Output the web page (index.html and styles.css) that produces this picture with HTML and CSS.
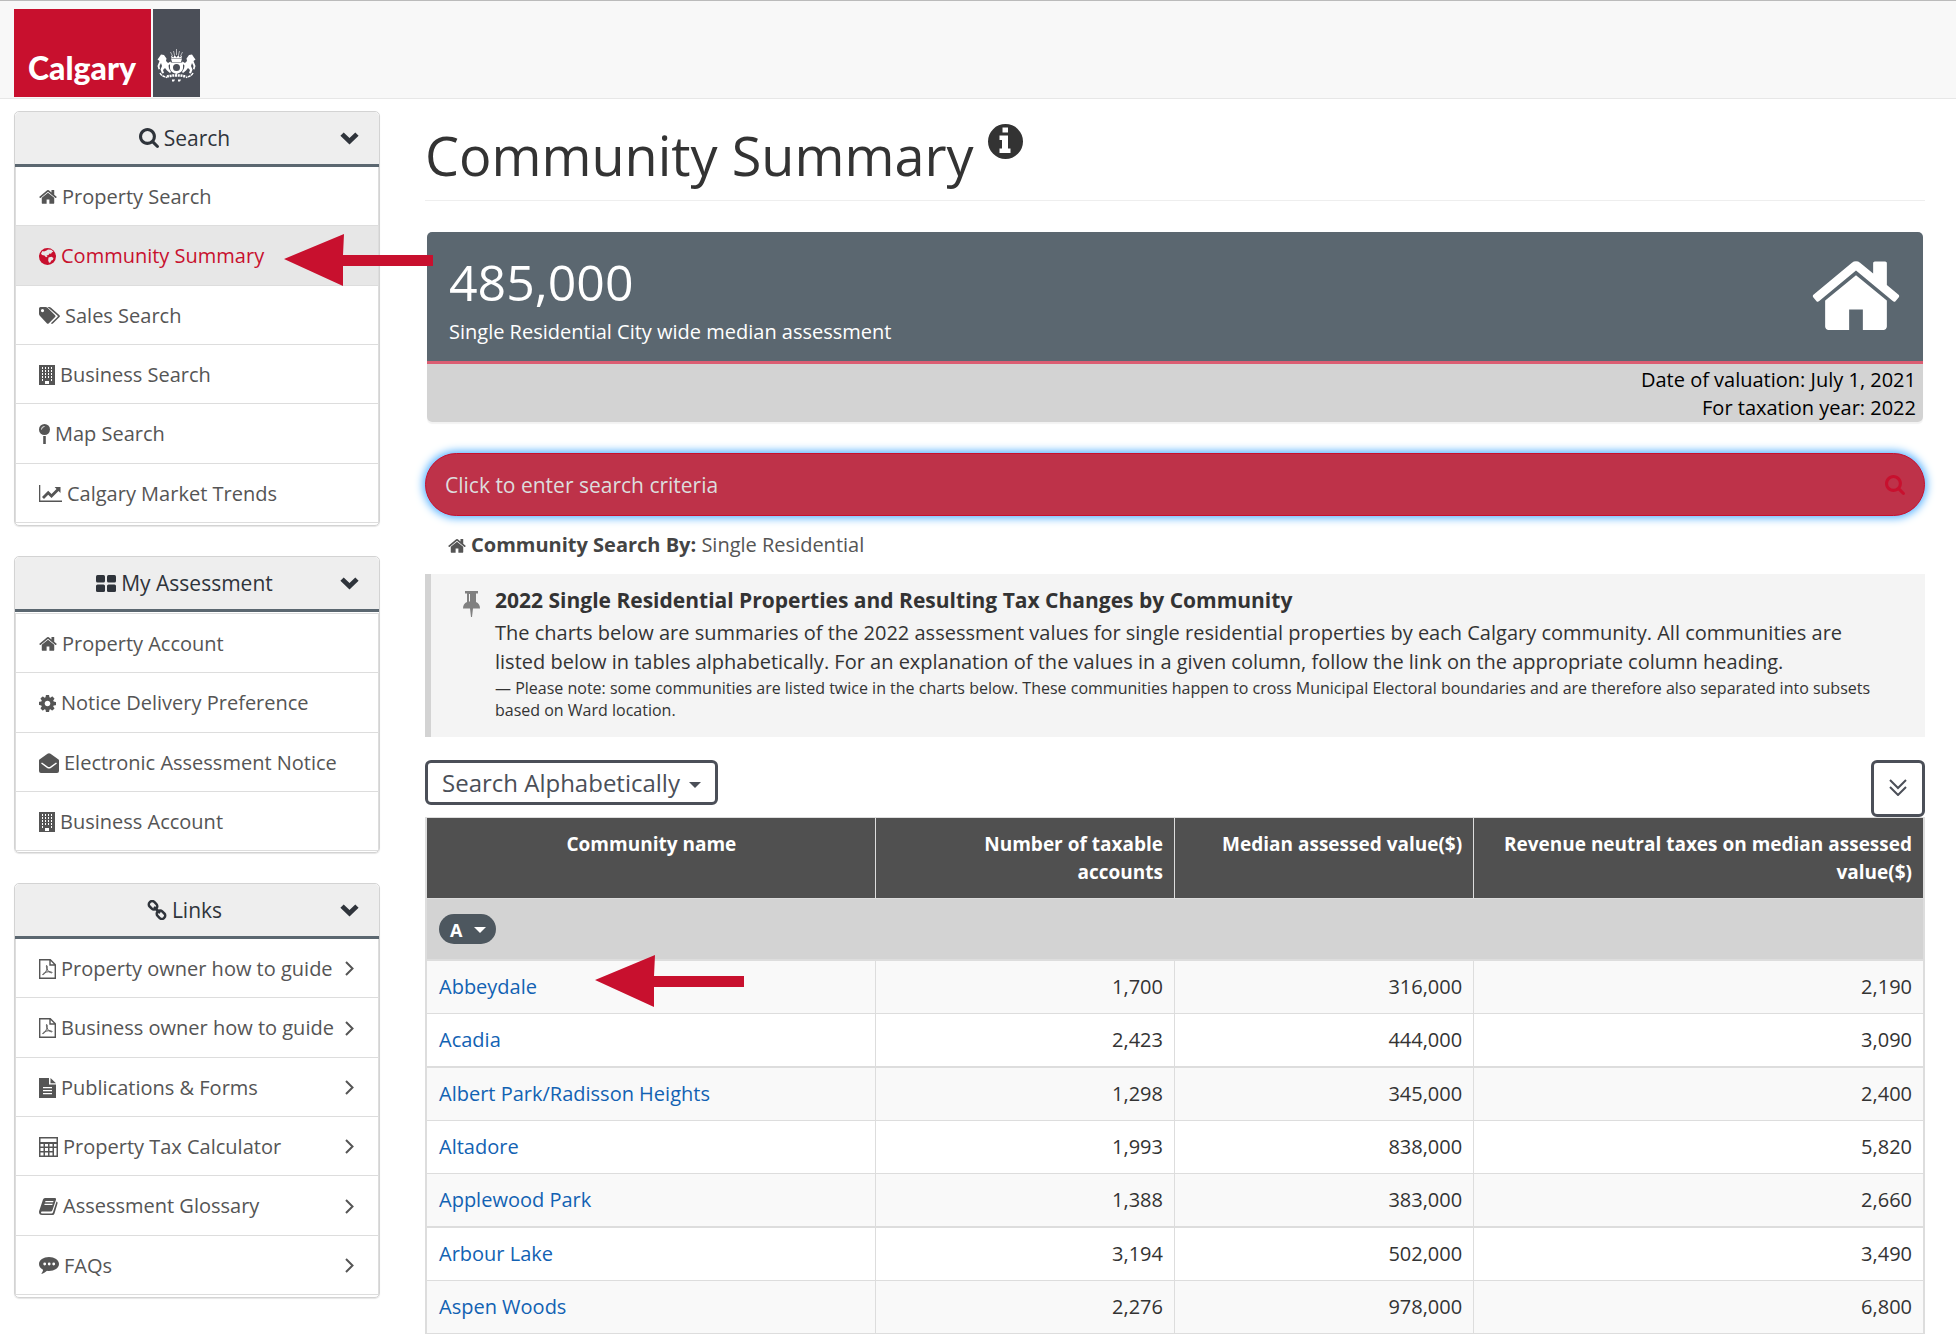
FILE: index.html
```html
<!DOCTYPE html>
<html lang="en">
<head>
    <meta charset="UTF-8">
    <meta name="viewport" content="width=device-width, initial-scale=1.0">
    <title>Community Summary</title>
    <link rel="stylesheet" href="styles.css">
</head>
<body>
    <!-- shared icons -->
    <svg class="sprite" aria-hidden="true">
        <symbol id="i-home" viewBox="64 192 1664 1344"><path d="M1472 992v480q0 26-19 45t-45 19h-384v-384h-256v384h-384q-26 0-45-19t-19-45v-480q0-1 .5-3t.5-3l575-474 575 474q1 2 1 6zm223-69l-62 74q-8 9-21 11h-3q-13 0-21-7l-692-577-692 577q-12 8-24 7-13-2-21-11l-62-74q-8-10-7-23.5t11-21.5l719-599q32-26 76-26t76 26l244 204v-195q0-14 9-23t23-9h192q14 0 23 9t9 23v408l219 182q10 8 11 21.5t-7 23.5z"/></symbol>
        <symbol id="i-search" viewBox="64 128 1664 1664"><path d="M1216 832q0-185-131.5-316.5t-316.5-131.5-316.5 131.5-131.5 316.5 131.5 316.5 316.5 131.5 316.5-131.5 131.5-316.5zm512 832q0 52-38 90t-90 38q-54 0-90-38l-343-342q-179 124-399 124-143 0-273.5-55.5t-225-150-150-225-55.5-273.5 55.5-273.5 150-225 225-150 273.5-55.5 273.5 55.5 225 150 150 225 55.5 273.5q0 220-124 399l343 343q37 37 37 90z"/></symbol>
        <symbol id="i-building" viewBox="0 0 16 20"><path fill-rule="evenodd" d="M0 0h16v20H0zM3 2v2h1V2zm3 0v2h1V2zm3 0v2h1V2zm3 0v2h1V2zM3 5v2h1V5zm3 0v2h1V5zm3 0v2h1V5zm3 0v2h1V5zM3 8v2h1V8zm3 0v2h1V8zm3 0v2h1V8zm3 0v2h1V8zM3 11v2h1v-2zm3 0v2h1v-2zm3 0v2h1v-2zm3 0v2h1v-2zM3 14v2h1v-2zm9 0v2h1v-2zM6 16v3h4v-3z"/></symbol>
        <symbol id="i-pdf" viewBox="0 0 17 20"><path fill="none" stroke="currentColor" stroke-width="1.4" d="M.7.7h10.6l5 5v13.6H.7zM11 .7v5.3h5.3"/><path fill="none" stroke="currentColor" stroke-width="1" d="M7.6 6.500c1 0 .6 3-.3 5.200C6.500 14 4.600 16 3.800 15.700c-.8-.5 1.700-2.300 4-2.700 2.300-.5 5.300-.3 5.300.5 0 .9-2.600 0-3.900-1.600C7.900 10.300 6.900 6.500 7.600 6.500z"/></symbol>
        <symbol id="i-down" viewBox="0 0 19 13"><path d="M9.500 12.500L.4 3.700 3.700.5l5.800 5.600L15.300.5l3.300 3.200z"/></symbol>
        <symbol id="i-right" viewBox="0 0 9 15"><path fill="none" stroke="currentColor" stroke-width="2" d="M1 1l6.500 6.500L1 14"/></symbol>
    </svg>

    <header class="topbar">
        <a class="logo" href="#" aria-label="Calgary">
            <span class="logo-name">Calgary</span>
            <span class="logo-crest">
                <svg width="39" height="33" viewBox="0 0 39 33" fill="#fff">
                    <path d="M14 9.500h11l-1 3.500h-9zM14 6.500l2.500 2 1-2.500 2 2.500 2-2.500 1 2.500 2.500-2-.5 2.500h-10z"/>
                    <path fill="none" stroke="#fff" stroke-width=".6" d="M19.500 0v6M16.500 2l1 4M22.500 2l-1 4M13.500 3l2 4M25.500 3l-2 4"/>
                    <path fill-rule="evenodd" d="M13 13.500h13v5.500c0 3-3 5-6.500 6-3.500-1-6.500-3-6.500-6zm6.500 1.500a3.500 3.500 0 100 7 3.500 3.500 0 000-7z"/>
                    <path d="M4 5.500L7 6l2.500 3.500L9 12l2 2 2.500-1.500.5 1.500-2.500 2.500.5 3 2 3.500-1 1-3-2.500L8 19l-2 2 1 3-2 .5-1.500-4L5 17l-1-3-1.500 3L3 20l-1.500.5L.5 17l2-5L.5 10.500 2 8.500z"/>
                    <path d="M35 5.500L32 6l-2.500 3.500.5 2.500-2 2-2.500-1.500-.5 1.500 2.500 2.500-.5 3-2 3.500 1 1 3-2.500L31 19l2 2-1 3 2 .5 1.500-4L34 17l1-3 1.500 3-.5 3 1.500.5 1-3.500-2-5 2-1.500L37 8.500z"/>
                    <path fill="none" stroke="#fff" stroke-width="1.500" stroke-dasharray="3 .6" d="M3 24c1.500 3 4 3.500 7 4.500M36 24c-1.500 3-4 3.500-7 4.500"/>
                    <path fill="none" stroke="#fff" stroke-width="2.500" stroke-dasharray="2 .7" d="M10 27.500c6-1.500 13-1.500 19 0"/>
                    <path d="M15 30.500h3l-1 2h-2zM21 30.500h3l-1 2h-2z"/>
                </svg>
            </span>
        </a>
    </header>

    <div class="page">
        <aside class="sidebar">
            <nav class="panel">
                <button class="panel-head" type="button">
                    <span class="panel-title"><svg width="20" height="20"><use href="#i-search"/></svg> Search</span>
                    <svg width="19" height="13"><use href="#i-down"/></svg>
                </button>
                <ul class="menu">
                    <li><a href="#"><svg width="18" height="15"><use href="#i-home"/></svg>Property Search</a></li>
                    <li class="active">
                        <a href="#"><svg width="17" height="17" viewBox="0 0 17 17"><circle cx="8.500" cy="8.500" r="8.500"/><path fill="#e7e7e7" d="M9 1.500l3.200.3 2.300 2-1.500.5-1 1.500-1.500-.2-1 1.500-2 .3 1 1.200-1.500.6-1.500-1.700L3 7 2 5.500 3.500 3 5 3.500 7.500 2.500zM9.500 9.500l3-.7 2 1.200-.7 2-1.500.5-1 2-1.300.3-.8-2.300z"/></svg>Community Summary</a>
                        <svg class="arrow" width="150" height="52" viewBox="0 0 150 52"><path d="M0 25L60 0l-1 21h90v11H59v20z"/></svg>
                    </li>
                    <li><a href="#"><svg width="21" height="17" viewBox="0 0 21 17"><path fill-rule="evenodd" d="M0 1.500Q0 0 1.500 0h5q1.200 0 2 .8l7.600 7.500q.8.800 0 1.700l-6.500 6.500q-.8.700-1.600 0L.8 8.800Q0 8 0 6.800zM3.500 2a1.600 1.600 0 100 3.200A1.600 1.600 0 003.500 2z"/><path d="M8.500 0h1.700q1 0 1.800.8l8.500 7.500q.8.800 0 1.700l-6.600 6.500q-1 .8-2-.2L18.400 10q.8-.8 0-1.600z"/></svg>Sales Search</a></li>
                    <li><a href="#"><svg width="16" height="20"><use href="#i-building"/></svg>Business Search</a></li>
                    <li><a href="#"><svg width="11" height="20" viewBox="0 0 11 20"><circle cx="5.500" cy="5.500" r="5.500"/><path d="M4.200 12h2.600v8H4.200z"/><path fill="none" stroke="#fff" stroke-width=".9" d="M2.500 5.500a3 3 0 013-3"/></svg>Map Search</a></li>
                    <li><a href="#"><svg width="23" height="17" viewBox="0 0 23 17"><path d="M0 0h1.300v15.600H23V17H0z"/><path d="M3 12l6.200-6.300 3.300 3.300 5-5L15.600 2H21.500v6l-2-2-7 7-3.300-3.300L5 14z"/></svg>Calgary Market Trends</a></li>
                </ul>
            </nav>

            <nav class="panel">
                <button class="panel-head" type="button">
                    <span class="panel-title"><svg width="20" height="17" viewBox="0 0 20 17"><rect width="9" height="7.500" rx="1.500"/><rect x="11" width="9" height="7.500" rx="1.500"/><rect y="9.500" width="9" height="7.500" rx="1.500"/><rect x="11" y="9.500" width="9" height="7.500" rx="1.500"/></svg> My Assessment</span>
                    <svg width="19" height="13"><use href="#i-down"/></svg>
                </button>
                <ul class="menu spaced">
                    <li><a href="#"><svg width="18" height="15"><use href="#i-home"/></svg>Property Account</a></li>
                    <li><a href="#"><svg width="17" height="17" viewBox="128 128 1536 1536"><path d="M1152 896q0-106-75-181t-181-75-181 75-75 181 75 181 181 75 181-75 75-181zm512-109v222q0 12-8 23t-20 13l-185 28q-19 54-39 91 35 50 107 138 10 12 10 25t-9 23q-27 37-99 108t-94 71q-12 0-26-9l-138-108q-44 23-91 38-16 136-29 186-7 28-36 28h-222q-14 0-24.500-8.500t-11.500-21.500l-28-184q-49-16-90-37l-141 107q-10 9-25 9-14 0-25-11-126-114-165-168-7-10-7-23 0-12 8-23 15-21 51-66.500t54-70.500q-27-50-41-99l-183-27q-13-2-21-12.500t-8-23.500v-222q0-12 8-23t19-13l186-28q14-46 39-92-40-57-107-138-10-12-10-24 0-10 9-23 26-36 98.500-107.500t94.500-71.500q13 0 26 10l138 107q44-23 91-38 16-136 29-186 7-28 36-28h222q14 0 24.500 8.500t11.500 21.500l28 184q49 16 90 37l142-107q9-9 24-9 13 0 25 10 129 119 165 170 7 8 7 22 0 12-8 23-15 21-51 66.500t-54 70.500q26 50 41 98l183 28q13 2 21 12.500t8 23.500z"/></svg>Notice Delivery Preference</a></li>
                    <li><a href="#"><svg width="20" height="20" viewBox="0 0 20 20"><path d="M0 7.500Q0 6.700.8 6.200L8.500.700q1.500-1 3 0l7.700 5.500q.8.500.8 1.300V18q0 2-2 2H2q-2 0-2-2z"/><path fill="none" stroke="#fff" stroke-width="1.500" d="M2.500 10l6 4.300q1.500 1 3 0l6-4.300"/></svg>Electronic Assessment Notice</a></li>
                    <li><a href="#"><svg width="16" height="20"><use href="#i-building"/></svg>Business Account</a></li>
                </ul>
            </nav>

            <nav class="panel">
                <button class="panel-head" type="button">
                    <span class="panel-title"><svg width="20" height="20" viewBox="0 0 20 20"><g fill="none" stroke="currentColor" stroke-width="2.500"><rect x="1.500" y="2" width="9" height="6.500" rx="3" transform="rotate(45 6 5.300)"/><rect x="9.500" y="11.500" width="9" height="6.500" rx="3" transform="rotate(45 14 14.700)"/><path d="M7 7l6 6"/></g></svg> Links</span>
                    <svg width="19" height="13"><use href="#i-down"/></svg>
                </button>
                <ul class="menu">
                    <li><a href="#"><svg width="17" height="20"><use href="#i-pdf"/></svg>Property owner how to guide<svg class="go" width="9" height="15"><use href="#i-right"/></svg></a></li>
                    <li><a href="#"><svg width="17" height="20"><use href="#i-pdf"/></svg>Business owner how to guide<svg class="go" width="9" height="15"><use href="#i-right"/></svg></a></li>
                    <li><a href="#"><svg width="17" height="20" viewBox="0 0 17 20"><path fill-rule="evenodd" d="M0 0h10v6.500h7V20H0zM4 9v1.300h9V9zm0 3v1.300h9V12zm0 3v1.300h9V15z"/><path d="M11.500 0L17 5.200h-5.500z"/></svg>Publications &amp; Forms<svg class="go" width="9" height="15"><use href="#i-right"/></svg></a></li>
                    <li><a href="#"><svg width="19" height="20" viewBox="0 0 19 20"><path fill-rule="evenodd" d="M0 0h19v20H0zM1.500 1.500V5h16V1.500zM1.500 7v2.500h3V7zm4.500 0v2.500h3V7zm4.500 0v2.500h3V7zM15 7v2.500h2.500V7zM1.500 11v3h3v-3zM6 11v3h3v-3zm4.500 0v3h3v-3zm-9 4.500v3h3v-3zm4.500 0v3h3v-3zm4.500 0v3h3v-3zM15 11v7.500h2.500V11z"/></svg>Property Tax Calculator<svg class="go" width="9" height="15"><use href="#i-right"/></svg></a></li>
                    <li><a href="#"><svg width="19" height="17" viewBox="0 0 19 17"><path fill-rule="evenodd" d="M6 0h10q1.500 0 1 1.700L13.500 12q-.5 1.500-2 1.500H3q-1 0-1 1t1 1h9.500q1 0 1.400-1L17.500 3.500q1.500.5 1 2L15.500 15.500q-.5 1.500-2 1.500H3q-3 0-3-3 0-1 .5-2L4 1.500Q4.500 0 6 0zM6.500 3l-.4 1.200h8L14.500 3zM5.700 5.700l-.4 1.200h8l.4-1.200z"/></svg>Assessment Glossary<svg class="go" width="9" height="15"><use href="#i-right"/></svg></a></li>
                    <li><a href="#"><svg width="20" height="17" viewBox="0 0 20 17"><path fill-rule="evenodd" d="M10 0c5.500 0 10 3 10 7s-4.500 7-10 7q-1 0-2-.2Q5.500 16.300 2 17q2-1.800 2-4.300Q0 10.500 0 7c0-4 4.500-7 10-7zM5.700 5.600a1.400 1.400 0 100 2.800 1.400 1.400 0 000-2.800zm4.500 0a1.400 1.400 0 100 2.800 1.400 1.400 0 000-2.800zm4.500 0a1.400 1.400 0 100 2.800 1.400 1.400 0 000-2.800z"/></svg>FAQs<svg class="go" width="9" height="15"><use href="#i-right"/></svg></a></li>
                </ul>
            </nav>
        </aside>

        <main class="content">
            <h1>Community Summary <svg width="35" height="35" viewBox="0 0 35 35"><path fill-rule="evenodd" d="M17.500 0a17.500 17.500 0 100 35 17.500 17.500 0 000-35zM14.500 3.500h5.500v5h-5.500zM11.500 11.500H20v13h2.500V29h-11v-4.500H14v-8.500h-2.500z"/></svg></h1>

            <section class="summary">
                <div class="summary-main">
                    <div>
                        <div class="summary-value">485,000</div>
                        <div>Single Residential City wide median assessment</div>
                    </div>
                    <svg width="90" height="72"><use href="#i-home"/></svg>
                </div>
                <div class="summary-foot">
                    <div>Date of valuation: July 1, 2021</div>
                    <div>For taxation year: 2022</div>
                </div>
            </section>

            <form class="search">
                <input type="text" placeholder="Click to enter search criteria" aria-label="Search criteria">
                <button type="button" aria-label="Search"><svg width="20" height="20"><use href="#i-search"/></svg></button>
            </form>

            <div class="search-by"><svg width="18" height="15"><use href="#i-home"/></svg><span><b>Community Search By:</b> Single Residential</span></div>

            <section class="callout">
                <svg width="17" height="26" viewBox="0 0 17 26"><path d="M2 0h13v2.500h-2V11q4 1.500 4 6.500h-7l-1 8.500H8l-1-8.500H0Q0 12.500 4 11V2.500H2z"/><path fill="#f4f4f4" d="M6 3h1v7.500H6z"/></svg>
                <div>
                    <h2>2022 Single Residential Properties and Resulting Tax Changes by Community</h2>
                    <p>The charts below are summaries of the 2022 assessment values for single residential properties by each Calgary community. All communities are listed below in tables alphabetically. For an explanation of the values in a given column, follow the link on the appropriate column heading.</p>
                    <small>— Please note: some communities are listed twice in the charts below. These communities happen to cross Municipal Electoral boundaries and are therefore also separated into subsets based on Ward location.</small>
                </div>
            </section>

            <div class="tools">
                <button class="alpha" type="button">Search Alphabetically <i class="caret"></i></button>
                <button class="expand" type="button" aria-label="Expand all"><svg width="18" height="17" viewBox="0 0 18 17"><path fill="none" stroke="currentColor" stroke-width="2" d="M1 1l8 8 8-8M1 8l8 8 8-8"/></svg></button>
            </div>

            <table>
                <thead>
                    <tr>
                        <th>Community name</th>
                        <th>Number of taxable<br>accounts</th>
                        <th>Median assessed value($)</th>
                        <th>Revenue neutral taxes on median assessed value($)</th>
                    </tr>
                </thead>
                <tbody>
                    <tr class="group"><td colspan="4"><button type="button">A <i class="caret"></i></button></td></tr>
                </tbody>
                <tbody class="rows">
                    <tr>
                        <td><a href="#">Abbeydale</a><svg class="arrow" width="150" height="52" viewBox="0 0 150 52"><path d="M0 25L60 0l-1 21h90v11H59v20z"/></svg></td>
                        <td>1,700</td><td>316,000</td><td>2,190</td>
                    </tr>
                    <tr><td><a href="#">Acadia</a></td><td>2,423</td><td>444,000</td><td>3,090</td></tr>
                    <tr><td><a href="#">Albert Park/Radisson Heights</a></td><td>1,298</td><td>345,000</td><td>2,400</td></tr>
                    <tr><td><a href="#">Altadore</a></td><td>1,993</td><td>838,000</td><td>5,820</td></tr>
                    <tr><td><a href="#">Applewood Park</a></td><td>1,388</td><td>383,000</td><td>2,660</td></tr>
                    <tr><td><a href="#">Arbour Lake</a></td><td>3,194</td><td>502,000</td><td>3,490</td></tr>
                    <tr><td><a href="#">Aspen Woods</a></td><td>2,276</td><td>978,000</td><td>6,800</td></tr>
                </tbody>
            </table>
        </main>
    </div>
</body>
</html>
```
FILE: styles.css
```css
* {
    box-sizing: border-box;
}

body {
    margin: 0;
    background-color: #fff;
    color: #333;
    font-family: "Open Sans", sans-serif;
    font-size: 20px;
    line-height: 28px;
}

svg {
    fill: currentColor;
    flex: none;
}

a {
    color: #1262b3;
    text-decoration: none;
}

button,
input {
    font-family: inherit;
    font-size: inherit;
}

button {
    cursor: pointer;
}

.sprite {
    display: none;
}

.topbar {
    background-color: #f8f8f8;
    border-top: 1px solid #bbb;
    border-bottom: 1px solid #e7e7e7;
    padding: 8px 14px 1px;
}

.logo {
    display: inline-flex;
    gap: 2px;
    height: 88px;
    vertical-align: top;
    color: #fff;
}

.logo-name {
    padding: 39px 15px 0 14px;
    background-color: #c8102e;
    font-family: Lato, sans-serif;
    font-size: 32px;
    font-weight: 900;
    line-height: 40px;
}

.logo-crest {
    padding: 40px 4px 0;
    background-color: #4b4f58;
}

.page {
    display: flex;
    gap: 45px;
    padding: 12px 31px 0 14px;
}

.sidebar {
    flex: none;
    width: 366px;
}

.panel {
    margin-bottom: 30px;
    border: 1px solid #d3d3d3;
    border-radius: 5px;
    box-shadow: 0 1px 1px rgba(0, 0, 0, 0.1);
}

.panel-head {
    display: flex;
    align-items: center;
    width: 100%;
    height: 55px;
    padding: 0 20px 0 14px;
    border: none;
    border-bottom: 3px solid #5b6770;
    border-radius: 5px 5px 0 0;
    background-color: #eee;
    color: #2f343b;
    font-size: 21px;
}

.panel-title {
    flex: 1;
    display: flex;
    justify-content: center;
    align-items: center;
    gap: 5px;
}

.menu {
    margin: 0;
    padding: 0 0 2px;
    list-style: none;
}

.menu.spaced {
    padding: 1px 0;
}

.menu li {
    position: relative;
    height: 59px;
    border: 1px solid #ddd;
    border-top: none;
}

.menu li:nth-child(3n+2) {
    height: 60px;
}

.menu.spaced li:first-child {
    height: 60px;
    border-top: 1px solid #ddd;
}

.menu li a {
    display: flex;
    align-items: center;
    gap: 5px;
    height: 100%;
    padding: 1px 24px 0 23px;
    color: #555;
}

.menu .go {
    margin-left: auto;
}

.menu .active {
    background-color: #e7e7e7;
}

.menu .active a {
    color: #c8102e;
}

/* red pointers drawn over the page */
.arrow {
    position: absolute;
    z-index: 2;
    color: #c8102e;
}

.active .arrow {
    top: 8px;
    left: 268px;
}

.content {
    flex: 1;
    min-width: 0;
}

h1 {
    display: flex;
    align-items: flex-start;
    gap: 14px;
    margin: 0 0 31px;
    padding: 13px 0 14px;
    border-bottom: 1px solid #eee;
    font-size: 54px;
    font-weight: 400;
    line-height: 62px;
}

.summary {
    margin: 0 2px 31px;
    border-radius: 5px;
    overflow: hidden;
    box-shadow: 0 2px 1px rgba(0, 0, 0, 0.05);
}

.summary-main {
    display: flex;
    justify-content: space-between;
    align-items: flex-start;
    padding: 22px 22px 15px;
    border-bottom: 3px solid #db5d72;
    background-color: #5b6770;
    color: #fff;
}

.summary-main svg {
    margin-top: 4px;
}

.summary-value {
    padding-bottom: 8px;
    font-size: 50px;
    line-height: 56px;
}

.summary-foot {
    padding: 2px 7px 0;
    background-color: #d3d3d3;
    color: #000;
    text-align: right;
}

.search {
    position: relative;
}

.search input {
    display: block;
    width: 100%;
    height: 63px;
    padding: 0 70px 0 19px;
    border: 1px solid #c8102e;
    border-radius: 32px;
    outline: none;
    background-color: #be3249;
    box-shadow: 0 0 8px 2px #52b0ff;
    color: #fff;
    font-size: 21px;
}

.search input::placeholder {
    color: #ddd;
    opacity: 1;
}

.search button {
    position: absolute;
    top: 22px;
    right: 20px;
    padding: 0;
    border: none;
    background: none;
    color: #c8102e;
    line-height: 20px;
}

.search button svg {
    display: block;
}

.search-by {
    display: flex;
    align-items: center;
    gap: 5px;
    padding: 15px 23px;
    color: #555;
}

.search-by b {
    color: #444;
}

.callout {
    display: flex;
    gap: 15px;
    padding: 12px 30px 14px 32px;
    border-left: 6px solid #d3d3d3;
    background-color: #f4f4f4;
}

.callout > svg {
    margin-top: 5px;
    color: #808080;
}

.callout h2 {
    margin: 0;
    padding-bottom: 4px;
    font-size: 21px;
    line-height: 28px;
}

.callout p {
    margin: 0;
    line-height: 29px;
}

.callout small {
    display: block;
    padding: 1px 0 2px;
    font-size: 16px;
    line-height: 22px;
}

.tools {
    display: flex;
    justify-content: space-between;
    align-items: flex-start;
    padding-top: 23px;
}

.alpha,
.expand {
    border: 3px solid #4b4f58;
    border-radius: 6px;
    background-color: #fff;
    color: #4b4f58;
}

.alpha {
    height: 45px;
    padding: 0 14px;
    font-size: 24px;
    line-height: 36px;
}

.alpha .caret {
    margin-left: 3px;
}

.expand {
    width: 54px;
    height: 57px;
}

.caret {
    display: inline-block;
    border: 6px solid transparent;
    border-top-color: currentColor;
    border-bottom: none;
    vertical-align: middle;
}

table {
    width: 100%;
    table-layout: fixed;
    border-collapse: separate;
    border-spacing: 0;
    border: solid #ddd;
    border-width: 1px 2px;
}

th,
td {
    padding: 12px 11px 12px 12px;
    border-right: 1px solid #ddd;
    border-bottom: 1px solid #ddd;
    text-align: right;
}

th:last-child,
td:last-child {
    border-right: none;
}

th {
    width: 20%;
    background-color: #505050;
    color: #fff;
    font-size: 19px;
    vertical-align: top;
}

th:first-child,
th:last-child {
    width: 30%;
}

th:first-child {
    text-align: center;
}

td:first-child {
    position: relative;
    text-align: left;
}

.group td {
    padding: 15px 12px;
    border-bottom-width: 2px;
    background-color: #d3d3d3;
}

.group button {
    display: flex;
    align-items: center;
    gap: 12px;
    height: 30px;
    padding: 2px 10px 0 11px;
    border: none;
    border-radius: 15px;
    background-color: #4d575f;
    color: #fff;
    font-size: 18px;
    font-weight: 700;
}

.rows tr:nth-child(odd) {
    background-color: #f9f9f9;
}

.rows tr:nth-child(3n+2) td {
    border-bottom-width: 2px;
}

.rows .arrow {
    top: -6px;
    left: 168px;
}
```
